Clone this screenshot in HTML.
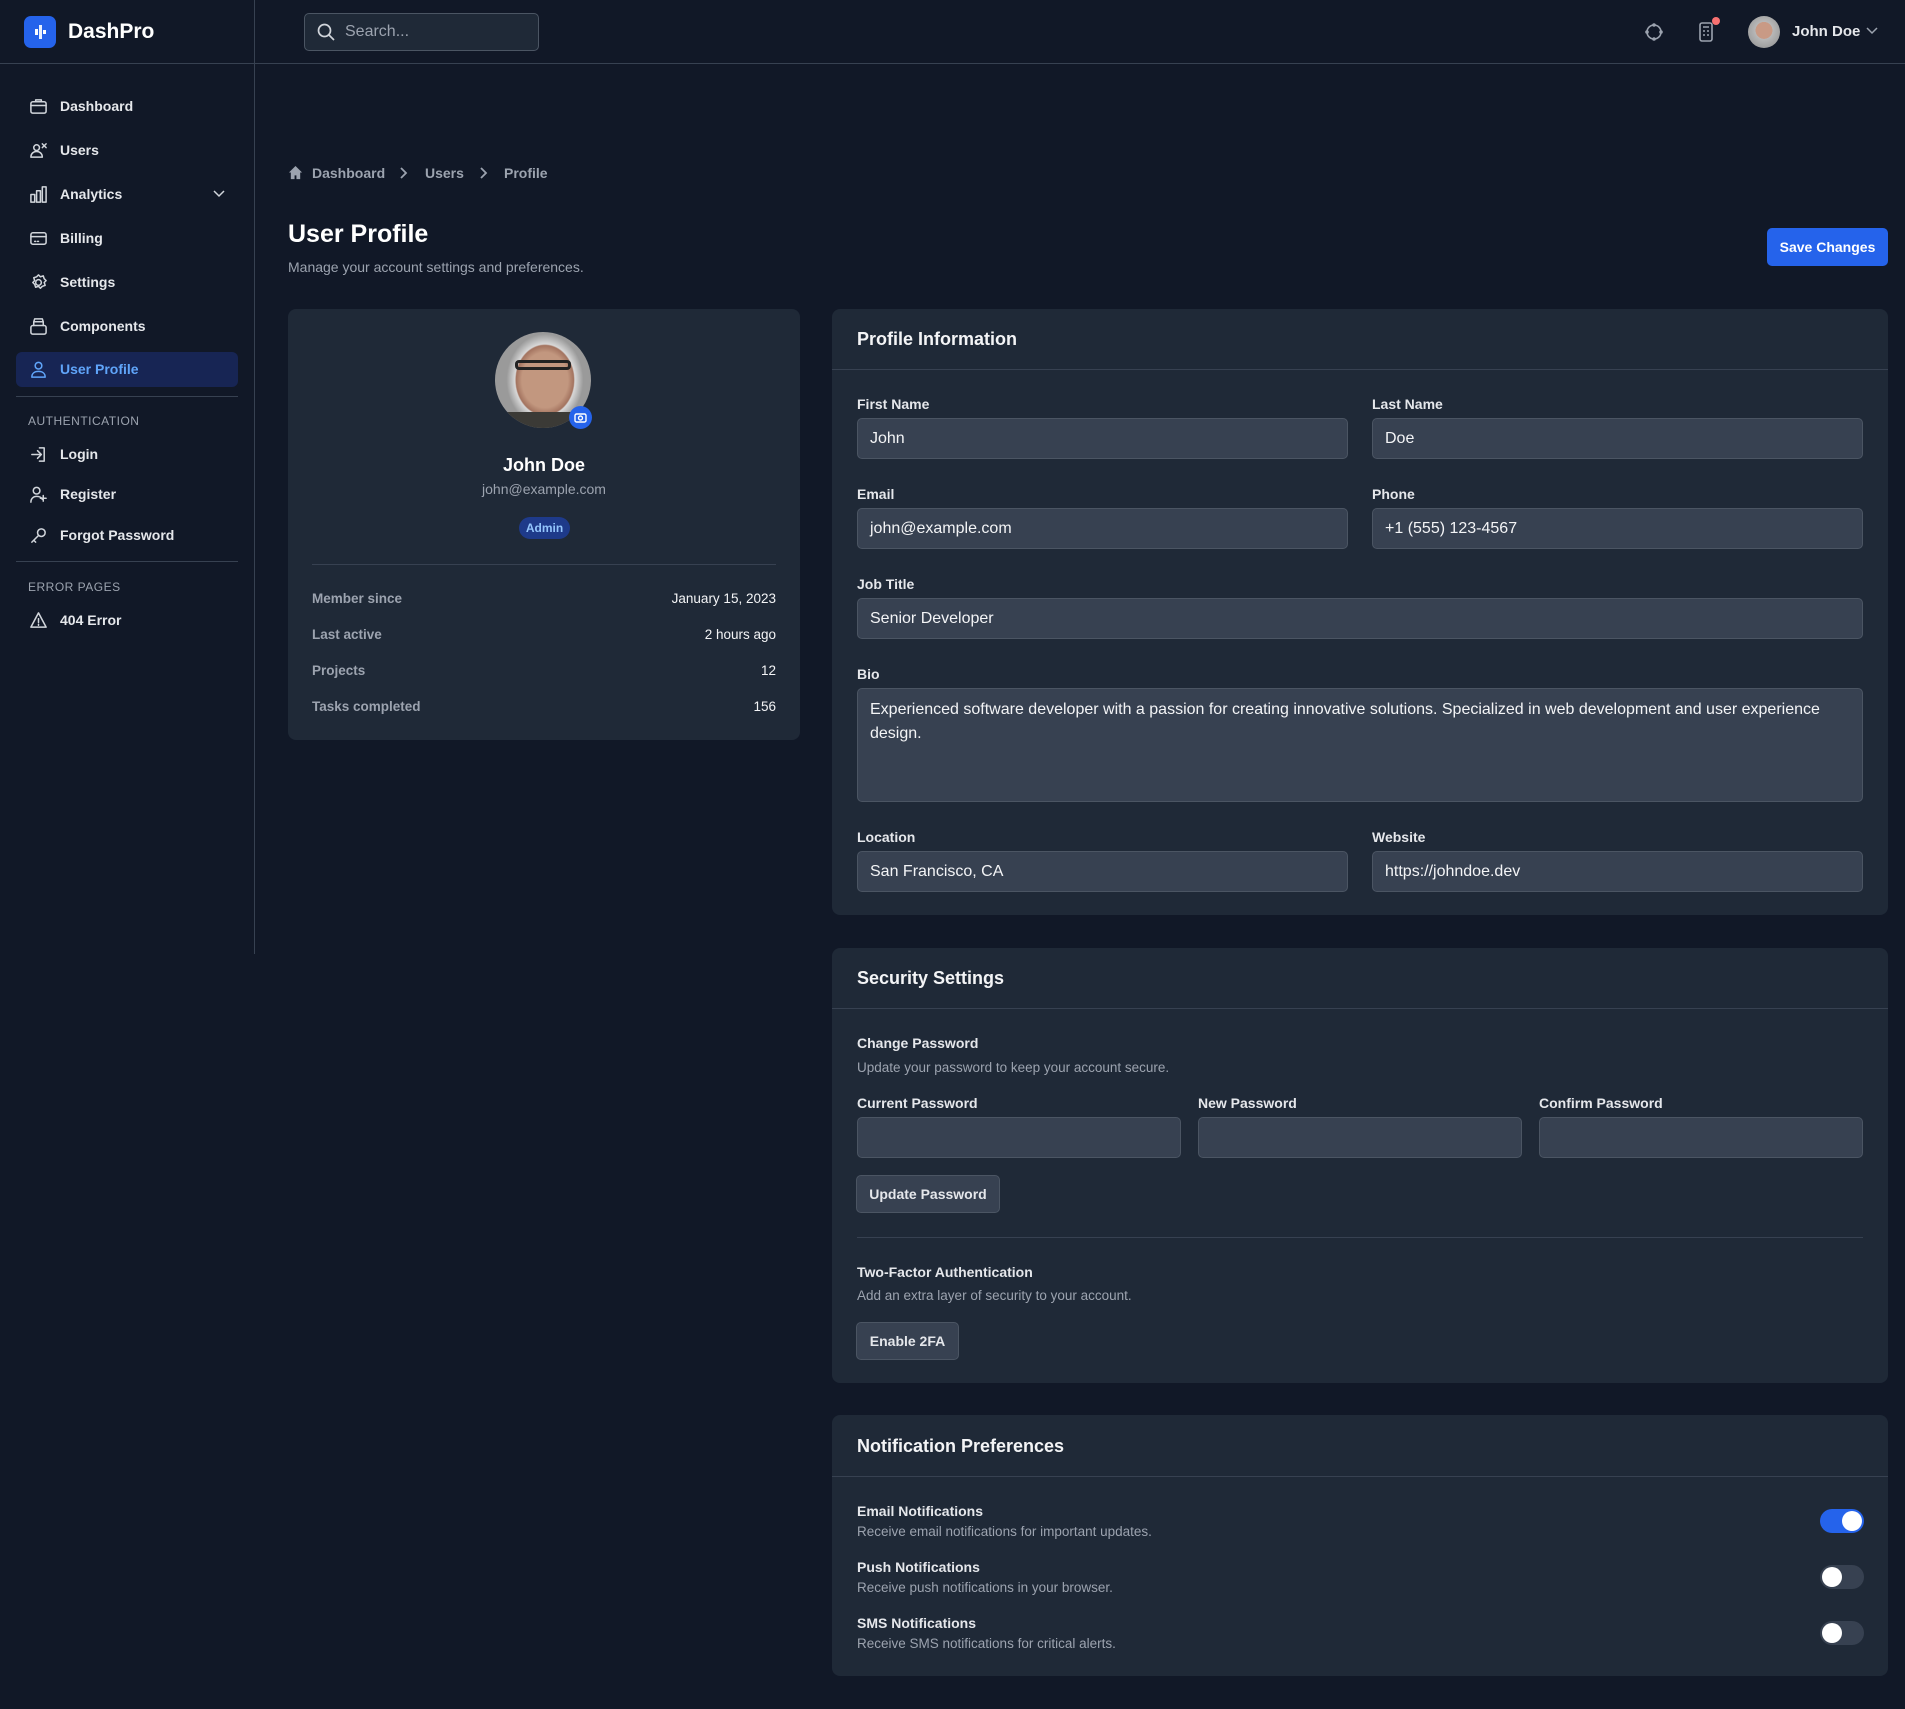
<!DOCTYPE html>
<html><head><meta charset="utf-8"><style>
*{box-sizing:border-box;margin:0;padding:0}
body{width:1905px;height:1709px;background:#111827;font-family:"Liberation Sans",sans-serif;color:#f3f4f6;position:relative;overflow:hidden}
.a{position:absolute}
.nav{position:absolute;left:16px;width:222px;height:36px;display:flex;align-items:center;font-size:14px;font-weight:bold;color:#e5e7eb}
.nav svg{position:absolute;left:13px;width:19px;height:19px;fill:none;stroke:#d1d5db;stroke-width:1.6;stroke-linecap:round;stroke-linejoin:round}
.nav span{position:absolute;left:44px}
.sec{position:absolute;left:28px;font-size:12px;color:#9ca3af;letter-spacing:.5px}
.hr{position:absolute;height:1px;background:#374151}
.card{position:absolute;background:#1f2937;border-radius:8px}
.lbl{position:absolute;font-size:14px;font-weight:bold;color:#e5e7eb}
.inp{position:absolute;height:41px;background:#374151;border:1px solid #4b5563;border-radius:5px;font-size:16px;color:#f3f4f6;padding:11px 12px;line-height:18px}
.h{position:absolute;font-size:18px;font-weight:bold;color:#f3f4f6}
.ds{position:absolute;font-size:13.5px;color:#9ca3af}
.btn{position:absolute;background:#374151;border:1px solid #4b5563;border-radius:5px;font-size:14px;font-weight:bold;color:#e5e7eb;display:flex;align-items:center;justify-content:center}
.row{position:absolute;left:312px;width:464px;font-size:13.5px;display:flex;justify-content:space-between}
.row b{color:#9ca3af}
.tg{position:absolute;left:1820px;width:44px;height:24px;border-radius:12px;background:#374151}
.tg i{position:absolute;top:2px;left:2px;width:20px;height:20px;border-radius:50%;background:#fff}
.tg.on{background:#2563eb}.tg.on i{left:22px}
</style></head><body>
<!-- header -->
<div class="hr" style="left:0;top:63px;width:1905px"></div>
<div class="a" style="left:254px;top:0;width:1px;height:954px;background:#374151"></div>
<div class="a" style="left:24px;top:16px;width:32px;height:32px;background:#2563eb;border-radius:7px">
<svg width="32" height="32" viewBox="0 0 32 32"><rect x="11" y="13" width="3" height="6" fill="#fff"/><rect x="15" y="9" width="3" height="14" fill="#fff" opacity=".9"/><rect x="19" y="14" width="3" height="4" fill="#fff"/></svg></div>
<div class="a" style="left:68px;top:20px;font-size:21px;font-weight:bold;color:#fff">DashPro</div>
<div class="a" style="left:304px;top:13px;width:235px;height:38px;border:1px solid #4b5563;border-radius:5px;background:#1f2937"></div>
<svg class="a" style="left:316px;top:22px" width="20" height="20" viewBox="0 0 20 20" fill="none" stroke="#d1d5db" stroke-width="1.7"><circle cx="8.5" cy="8.5" r="6"/><path d="M13 13l5 5"/></svg>
<div class="a" style="left:345px;top:23px;font-size:16px;color:#9ca3af">Search...</div>
<svg class="a" style="left:1644px;top:22px" width="20" height="20" viewBox="0 0 20 20" fill="none" stroke="#9ca3af" stroke-width="1.6"><circle cx="10" cy="10" r="7"/><circle cx="10" cy="3" r="1" fill="#9ca3af"/><circle cx="10" cy="17" r="1" fill="#9ca3af"/><circle cx="3" cy="10" r="1" fill="#9ca3af"/><circle cx="17" cy="10" r="1" fill="#9ca3af"/></svg>
<svg class="a" style="left:1698px;top:21px" width="18" height="22" viewBox="0 0 18 22" fill="none" stroke="#9ca3af" stroke-width="1.6"><rect x="2" y="2" width="12" height="18" rx="2"/><path d="M5 6h6M5 10h2M9 10h2M5 14h2M9 14h2"/></svg>
<div class="a" style="left:1712px;top:17px;width:8px;height:8px;border-radius:50%;background:#f87171"></div>
<div class="a" style="left:1748px;top:16px;width:32px;height:32px;border-radius:50%;background:radial-gradient(circle at 50% 45%,#c99a85 0 35%,#b8b8b8 36%,#8c8c8c 100%)"></div>
<div class="a" style="left:1792px;top:23px;font-size:15px;font-weight:bold;color:#e5e7eb">John Doe</div>
<svg class="a" style="left:1865px;top:26px" width="14" height="10" viewBox="0 0 14 10" fill="none" stroke="#9ca3af" stroke-width="1.5"><path d="M2 2l5 5 5-5"/></svg>
<!-- sidebar -->
<div class="nav" style="top:88px"><svg viewBox="0 0 20 20"><rect x="2" y="5" width="16" height="12" rx="2"/><path d="M7 5V3h6v2M2 9h16"/></svg><span>Dashboard</span></div>
<div class="nav" style="top:132px"><svg viewBox="0 0 20 20"><circle cx="8" cy="7" r="3"/><path d="M2 17c0-4 3-6 6-6s6 2 6 6zM14 3l4 4M18 3l-4 4"/></svg><span>Users</span></div>
<div class="nav" style="top:176px"><svg viewBox="0 0 20 20"><rect x="2" y="10" width="4" height="8"/><rect x="8" y="6" width="4" height="12"/><rect x="14" y="2" width="4" height="16"/></svg><span>Analytics</span></div>
<svg class="a" style="left:212px;top:189px" width="14" height="10" viewBox="0 0 14 10" fill="none" stroke="#d1d5db" stroke-width="1.5"><path d="M2 2l5 5 5-5"/></svg>
<div class="nav" style="top:220px"><svg viewBox="0 0 20 20"><rect x="2" y="4" width="16" height="12" rx="2"/><path d="M2 8h16M6 13h1M9 13h1"/></svg><span>Billing</span></div>
<div class="nav" style="top:264px"><svg viewBox="0 0 20 20"><circle cx="10" cy="10" r="3"/><path d="M10 2l2 2 3-1 1 3 2 2-2 2 1 3-3 1-2 2-2-2-3 1-1-3-2-2 2-2-1-3 3-1z"/></svg><span>Settings</span></div>
<div class="nav" style="top:308px"><svg viewBox="0 0 20 20"><rect x="2" y="9" width="16" height="9" rx="2"/><path d="M5 9V5h10v4M5 5l1-3h8l1 3"/></svg><span>Components</span></div>
<div class="a" style="left:16px;top:352px;width:222px;height:35px;background:#172554;border-radius:6px"></div>
<div class="nav" style="top:351px;color:#60a5fa"><svg viewBox="0 0 20 20" style="stroke:#60a5fa"><circle cx="10" cy="6" r="3.5"/><path d="M3 18c0-4 3-6 7-6s7 2 7 6z"/></svg><span>User Profile</span></div>
<div class="hr" style="left:16px;top:396px;width:222px"></div>
<div class="sec" style="top:414px">AUTHENTICATION</div>
<div class="nav" style="top:436px"><svg viewBox="0 0 20 20"><path d="M11 3h5v14h-5M3 10h10M9 6l4 4-4 4"/></svg><span>Login</span></div>
<div class="nav" style="top:476px"><svg viewBox="0 0 20 20"><circle cx="8" cy="6" r="3.5"/><path d="M2 18c0-4 3-6 6-6s5 1 6 3M15 11v6M12 14h6"/></svg><span>Register</span></div>
<div class="nav" style="top:517px"><svg viewBox="0 0 20 20"><circle cx="13" cy="7" r="4"/><path d="M10 10l-7 7M5 15l2 2"/></svg><span>Forgot Password</span></div>
<div class="hr" style="left:16px;top:561px;width:222px"></div>
<div class="sec" style="top:580px">ERROR PAGES</div>
<div class="nav" style="top:602px"><svg viewBox="0 0 20 20"><path d="M10 2l8 15H2zM10 8v4M10 14v1"/></svg><span>404 Error</span></div>
<!-- breadcrumb -->
<svg class="a" style="left:288px;top:165px" width="15" height="15" viewBox="0 0 16 16" fill="#9ca3af"><path d="M8 1L1 8h2v7h4v-4h2v4h4V8h2z"/></svg>
<div class="a" style="left:312px;top:165px;font-size:14px;font-weight:bold;color:#9ca3af">Dashboard</div>
<svg class="a" style="left:398px;top:166px" width="10" height="14" viewBox="0 0 10 14" fill="none" stroke="#9ca3af" stroke-width="1.8"><path d="M3 2l5 5-5 5"/></svg>
<div class="a" style="left:425px;top:165px;font-size:14px;font-weight:bold;color:#9ca3af">Users</div>
<svg class="a" style="left:478px;top:166px" width="10" height="14" viewBox="0 0 10 14" fill="none" stroke="#9ca3af" stroke-width="1.8"><path d="M3 2l5 5-5 5"/></svg>
<div class="a" style="left:504px;top:165px;font-size:14px;font-weight:bold;color:#9ca3af">Profile</div>
<div class="a" style="left:288px;top:220px;font-size:25px;font-weight:bold;color:#fff">User Profile</div>
<div class="a" style="left:288px;top:259px;font-size:14px;color:#9ca3af">Manage your account settings and preferences.</div>
<div class="a" style="left:1767px;top:228px;width:121px;height:38px;background:#2563eb;border-radius:5px;color:#fff;font-size:14px;font-weight:bold;display:flex;align-items:center;justify-content:center">Save Changes</div>
<!-- left card -->
<div class="card" style="left:288px;top:309px;width:512px;height:431px"></div>
<div class="a" style="left:495px;top:332px;width:96px;height:96px;border-radius:50%;background:radial-gradient(ellipse 40% 48% at 52% 50%,#c2977f 0 60%,#a3735f 75%,#d8d8d8 78%,#9a9a9a 100%);overflow:hidden"><div class="a" style="left:20px;top:28px;width:56px;height:10px;border:3px solid #222;border-radius:4px"></div><div class="a" style="left:10px;top:80px;width:76px;height:20px;background:#3b3a36"></div></div>
<div class="a" style="left:569px;top:406px;width:23px;height:23px;border-radius:50%;background:#2563eb"><svg width="23" height="23" viewBox="0 0 23 23" fill="none" stroke="#fff" stroke-width="1.4"><rect x="6" y="8" width="11" height="8" rx="1.5"/><circle cx="11.5" cy="12" r="2"/></svg></div>
<div class="a" style="left:288px;top:455px;width:512px;text-align:center;font-size:18px;font-weight:bold;color:#fff">John Doe</div>
<div class="a" style="left:288px;top:481px;width:512px;text-align:center;font-size:14px;color:#9ca3af">john@example.com</div>
<div class="a" style="left:519px;top:517px;width:51px;height:22px;border-radius:11px;background:#1e3a8a;color:#93c5fd;font-size:12px;font-weight:bold;display:flex;align-items:center;justify-content:center">Admin</div>
<div class="hr" style="left:312px;top:564px;width:464px"></div>
<div class="row" style="top:591px"><b>Member since</b><span>January 15, 2023</span></div>
<div class="row" style="top:627px"><b>Last active</b><span>2 hours ago</span></div>
<div class="row" style="top:663px"><b>Projects</b><span>12</span></div>
<div class="row" style="top:699px"><b>Tasks completed</b><span>156</span></div>
<!-- profile info -->
<div class="card" style="left:832px;top:309px;width:1056px;height:606px"></div>
<div class="h" style="left:857px;top:329px">Profile Information</div>
<div class="hr" style="left:832px;top:369px;width:1056px"></div>
<div class="lbl" style="left:857px;top:396px">First Name</div><div class="lbl" style="left:1372px;top:396px">Last Name</div>
<div class="inp" style="left:857px;top:418px;width:491px">John</div><div class="inp" style="left:1372px;top:418px;width:491px">Doe</div>
<div class="lbl" style="left:857px;top:486px">Email</div><div class="lbl" style="left:1372px;top:486px">Phone</div>
<div class="inp" style="left:857px;top:508px;width:491px">john@example.com</div><div class="inp" style="left:1372px;top:508px;width:491px">+1 (555) 123-4567</div>
<div class="lbl" style="left:857px;top:576px">Job Title</div>
<div class="inp" style="left:857px;top:598px;width:1006px">Senior Developer</div>
<div class="lbl" style="left:857px;top:666px">Bio</div>
<div class="inp" style="left:857px;top:688px;width:1006px;height:114px;line-height:24px;padding-top:9px">Experienced software developer with a passion for creating innovative solutions. Specialized in web development and user experience design.</div>
<div class="lbl" style="left:857px;top:829px">Location</div><div class="lbl" style="left:1372px;top:829px">Website</div>
<div class="inp" style="left:857px;top:851px;width:491px">San Francisco, CA</div><div class="inp" style="left:1372px;top:851px;width:491px">https://johndoe.dev</div>
<!-- security -->
<div class="card" style="left:832px;top:948px;width:1056px;height:435px"></div>
<div class="h" style="left:857px;top:968px">Security Settings</div>
<div class="hr" style="left:832px;top:1008px;width:1056px"></div>
<div class="lbl" style="left:857px;top:1035px">Change Password</div>
<div class="ds" style="left:857px;top:1060px">Update your password to keep your account secure.</div>
<div class="lbl" style="left:857px;top:1095px">Current Password</div><div class="lbl" style="left:1198px;top:1095px">New Password</div><div class="lbl" style="left:1539px;top:1095px">Confirm Password</div>
<div class="inp" style="left:857px;top:1117px;width:324px"></div><div class="inp" style="left:1198px;top:1117px;width:324px"></div><div class="inp" style="left:1539px;top:1117px;width:324px"></div>
<div class="btn" style="left:856px;top:1175px;width:144px;height:38px">Update Password</div>
<div class="hr" style="left:857px;top:1237px;width:1006px"></div>
<div class="lbl" style="left:857px;top:1264px">Two-Factor Authentication</div>
<div class="ds" style="left:857px;top:1288px">Add an extra layer of security to your account.</div>
<div class="btn" style="left:856px;top:1322px;width:103px;height:38px">Enable 2FA</div>
<!-- notifications -->
<div class="card" style="left:832px;top:1415px;width:1056px;height:261px"></div>
<div class="h" style="left:857px;top:1436px">Notification Preferences</div>
<div class="hr" style="left:832px;top:1476px;width:1056px"></div>
<div class="lbl" style="left:857px;top:1503px">Email Notifications</div><div class="ds" style="left:857px;top:1524px">Receive email notifications for important updates.</div>
<div class="lbl" style="left:857px;top:1559px">Push Notifications</div><div class="ds" style="left:857px;top:1580px">Receive push notifications in your browser.</div>
<div class="lbl" style="left:857px;top:1615px">SMS Notifications</div><div class="ds" style="left:857px;top:1636px">Receive SMS notifications for critical alerts.</div>
<div class="tg on" style="top:1509px"><i></i></div>
<div class="tg" style="top:1565px"><i></i></div>
<div class="tg" style="top:1621px"><i></i></div>
</body></html>
